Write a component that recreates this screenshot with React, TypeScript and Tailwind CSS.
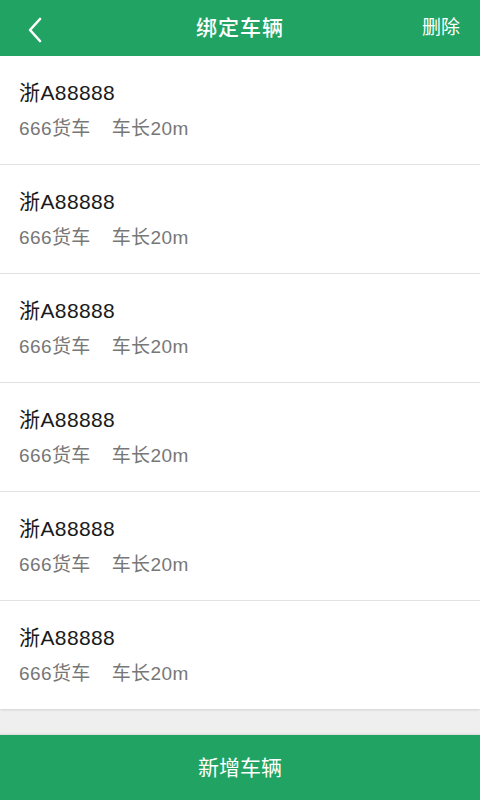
import React from 'react';

const cars = Array.from({ length: 6 }, () => ({ plate: '浙A88888', type: '666货车', length: '车长20m' }));

export default function App() {
  return (
    <div
      className="flex h-[800px] w-[480px] flex-col bg-[#efefef]"
      style={{ fontFamily: '"Liberation Sans", "Noto Sans CJK SC", sans-serif' }}
    >
      <header className="relative flex h-[56px] shrink-0 items-center justify-center bg-[#21a463] text-white">
        <button className="absolute left-[22px] top-[13px] p-1">
          <svg width="20" height="26" viewBox="0 0 20 26" fill="none">
            <path d="M14 2 L4 13 L14 24" stroke="white" strokeWidth="2.6" strokeLinecap="round" strokeLinejoin="round" />
          </svg>
        </button>
        <h1 className="text-[21px] font-medium tracking-[1px]">绑定车辆</h1>
        <span className="absolute right-[20px] text-[19px]">删除</span>
      </header>

      <main className="flex-1 overflow-hidden">
        <ul className="bg-white shadow-[0_1px_2px_rgba(0,0,0,0.12)]">
          {cars.map((car, i) => (
            <li
              key={i}
              className={'px-[19px] pt-[23px] ' + (i < cars.length - 1 ? 'h-[109px] border-b border-[#e2e2e2]' : 'h-[108px]')}
            >
              <div className="text-[21px] leading-[28px] tracking-[0.4px] text-[#1a1a1a]">{car.plate}</div>
              <div className="mt-[10px] flex gap-[21px] text-[19px] leading-[24px] tracking-[0.4px] text-[#777]">
                <span>{car.type}</span>
                <span>{car.length}</span>
              </div>
            </li>
          ))}
        </ul>
      </main>

      <button className="flex h-[65px] shrink-0 items-center justify-center bg-[#21a463] text-[21px] text-white shadow-[0_-1px_2px_rgba(0,0,0,0.1)]">
        新增车辆
      </button>
    </div>
  );
}
